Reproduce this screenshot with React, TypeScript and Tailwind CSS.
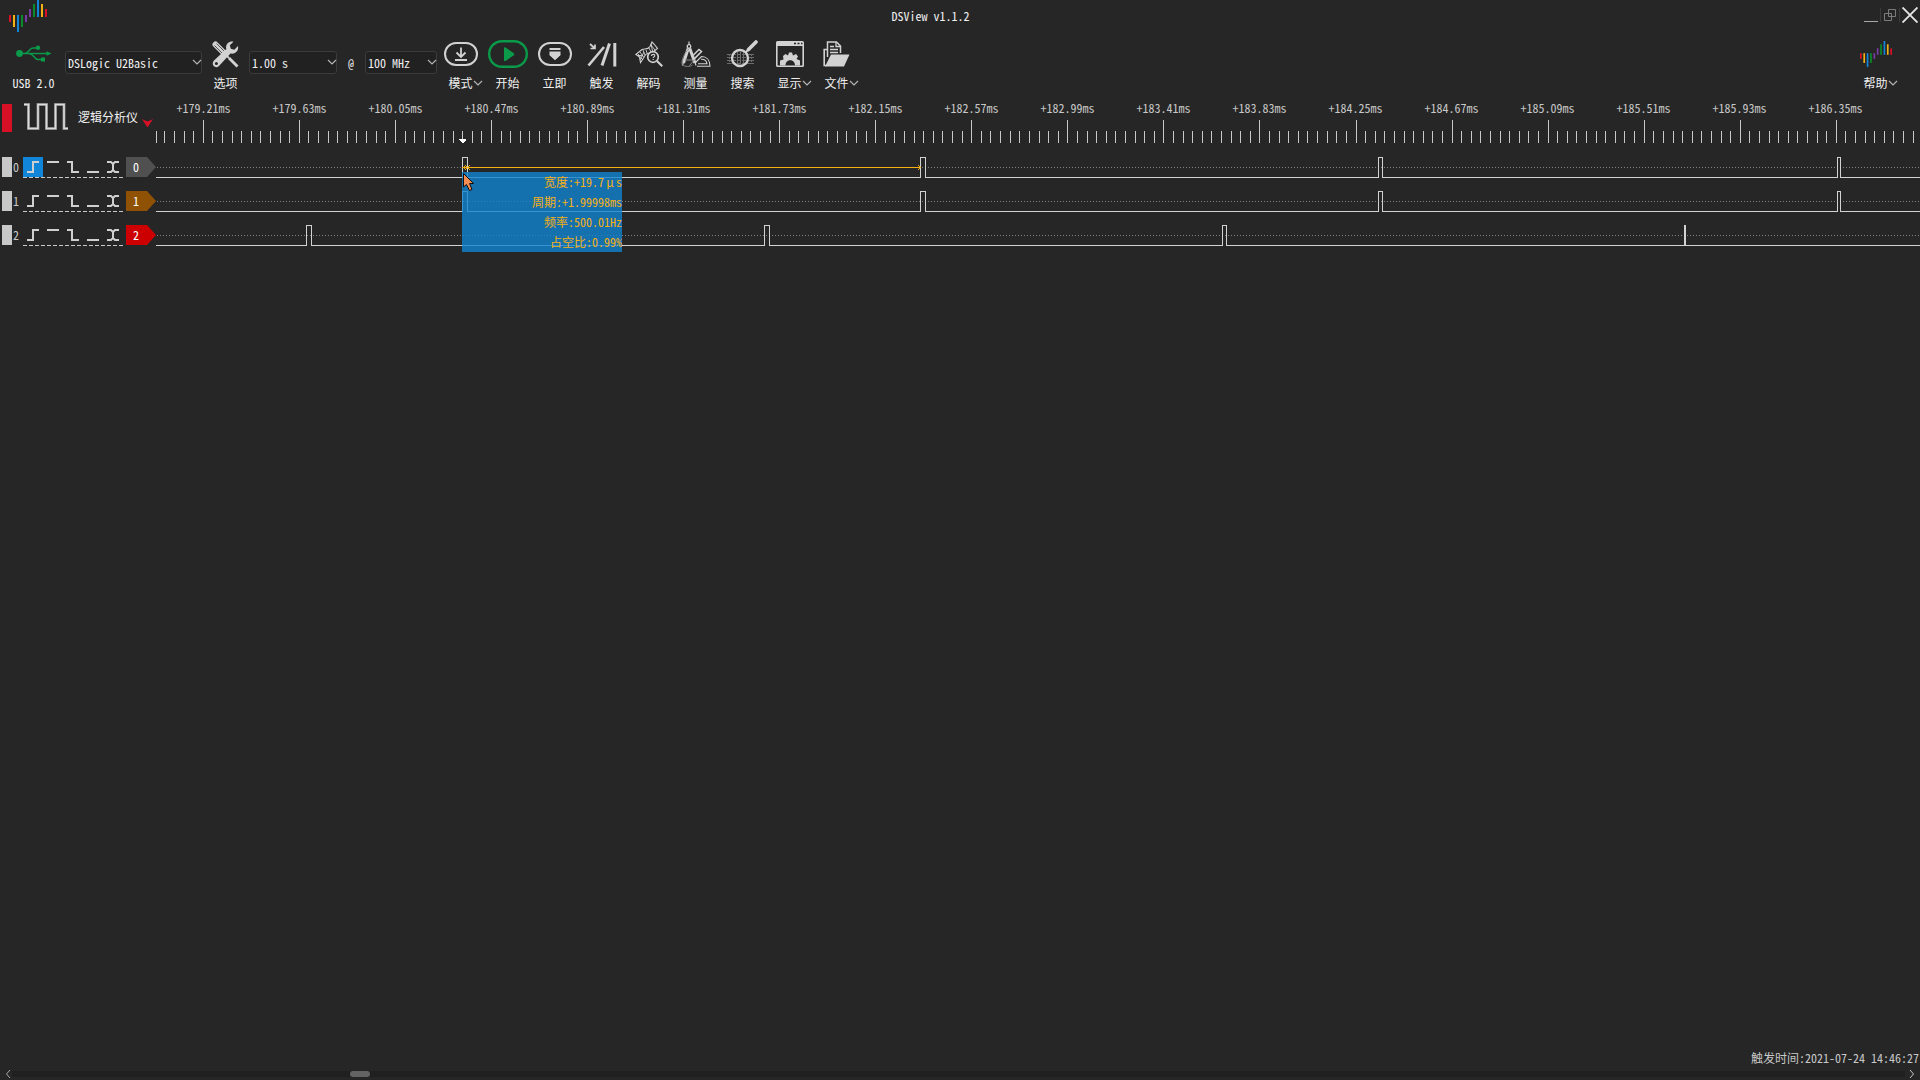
import React from 'react';
import type { ReactNode } from 'react';

const ink = '#d2d2d2';

const LOGO_BARS = [
  { x: 0, y: 15, h: 7, c: '#d81026' },
  { x: 4, y: 15, h: 12, c: '#f5b014' },
  { x: 8, y: 15, h: 17, c: '#1185d7' },
  { x: 12, y: 15, h: 12, c: '#098a2b' },
  { x: 16, y: 15, h: 7, c: '#7a3aa5' },
  { x: 20, y: 9, h: 8, c: '#7a3aa5' },
  { x: 24, y: 4, h: 13, c: '#098a2b' },
  { x: 28, y: 0, h: 17, c: '#1185d7' },
  { x: 32, y: 4, h: 13, c: '#f5b014' },
  { x: 36, y: 9, h: 8, c: '#d81026' },
];

function Logo({ width, height }: { width: number; height: number }) {
  return (
    <svg width={width} height={height} viewBox="0 0 38 32" preserveAspectRatio="none" aria-hidden="true">
      {LOGO_BARS.map((b) => (
        <rect key={b.x} x={b.x} y={b.y} width="2" height={b.h} fill={b.c} />
      ))}
    </svg>
  );
}

function Chevron() {
  return (
    <svg width="10" height="6" viewBox="0 0 10 6" fill="none" stroke="#b4b4b4" strokeWidth="1.2" aria-hidden="true">
      <path d="M1 1l4 4 4-4" />
    </svg>
  );
}

function Combo({ label, options, className }: { label: string; options: string[]; className: string }) {
  return (
    <div className={`relative flex h-[23px] ${className}`}>
      <select
        aria-label={label}
        className="w-full appearance-none rounded-[3px] border border-[#3b3b3b] bg-[#212121] pl-[2px] pr-3 text-xs leading-5 text-[#f0f0f0] outline-none"
      >
        {options.map((o) => (
          <option key={o}>{o}</option>
        ))}
      </select>
      <span className="pointer-events-none absolute right-0 top-2">
        <Chevron />
      </span>
    </div>
  );
}

function ToolButton({ label, menu, children }: { label: string; menu?: boolean; children: ReactNode }) {
  return (
    <button type="button" className="flex w-[47px] flex-col items-center text-xs text-[#f0f0f0]">
      <span className="flex h-[30px] items-center">{children}</span>
      <span className="mt-1 flex h-5 items-center whitespace-nowrap">
        {label}
        {menu && (
          <span className="w-0">
            <Chevron />
          </span>
        )}
      </span>
    </button>
  );
}

function UsbIcon() {
  return (
    <svg width="36" height="18" viewBox="0 0 36 18" fill="none" aria-hidden="true">
      <g stroke="#0a9a4a" strokeWidth="1.4">
        <path d="M3 8.5H31" />
        <path d="M9 8.5C13 8.500 13 3 17 3H22" />
        <path d="M13 8.500C18 8.500 18 14.500 22 14.500H26" />
      </g>
      <g fill="#0a9a4a">
        <circle cx="3.500" cy="8.500" r="3.400" />
        <circle cx="22" cy="2.700" r="2.200" />
        <rect x="25" y="12.500" width="4" height="4" />
        <path d="M30.500 6.200L35.500 8.500L30.500 10.800Z" />
      </g>
    </svg>
  );
}

function OptionsIcon() {
  return (
    <svg width="27" height="27" viewBox="0 0 27 27" fill="none" aria-hidden="true">
      <path d="M3.500 3.500L10.500 10.500" stroke={ink} strokeWidth="6" strokeLinecap="round" />
      <path d="M2.500 4.500L10 12M4.500 2.500L12 10" stroke="#444" strokeWidth="0.900" />
      <path d="M10 10L17 17" stroke={ink} strokeWidth="1.800" />
      <path d="M17 17L25.500 25.500" stroke={ink} strokeWidth="2.800" />
      <path
        d="M21.500 0.700C17.500-.4 13 3 14.300 8L2 19.500C-1.500 23.500 3 28.500 7 25L18.500 12.500C23.500 13.500 27 9.500 26 5L22.300 8.700L18.800 7.700L17.800 4.300Z"
        fill={ink}
      />
      <circle cx="4.400" cy="22.600" r="1.500" fill="#262626" />
    </svg>
  );
}

function ModeIcon() {
  return (
    <svg width="34" height="24" viewBox="0 0 34 24" fill="none" stroke={ink} aria-hidden="true">
      <rect x="1" y="1" width="32" height="22" rx="11" strokeWidth="2" />
      <path d="M17 5.500V14.500M12.500 10.500L17 15L21.500 10.500M11 18H23" strokeWidth="1.800" />
    </svg>
  );
}

function StartIcon() {
  return (
    <svg width="40" height="28" viewBox="0 0 40 28" fill="none" aria-hidden="true">
      <rect x="1.200" y="1.200" width="37.600" height="25.600" rx="12.800" stroke="#0a9a4a" strokeWidth="2.400" />
      <path d="M16 8V20.500C16 21.200 17 21.300 17.500 21L25.500 15.500C26.500 14.700 26.500 13.700 25.500 13L17.500 7.500C16.900 7.100 16 7.300 16 8Z" fill="#0a9a4a" />
    </svg>
  );
}

function InstantIcon() {
  return (
    <svg width="34" height="24" viewBox="0 0 34 24" fill="none" aria-hidden="true">
      <rect x="1" y="1" width="32" height="22" rx="11" stroke={ink} strokeWidth="2" />
      <path d="M11.500 6H22.500V8H11.500Z M11.500 9.500H22.500V13L17 18L11.500 13Z" fill={ink} />
      <path d="M12 12.500L17 17L22 12.500" stroke={ink} strokeWidth="1.500" />
    </svg>
  );
}

function TriggerIcon() {
  return (
    <svg width="30" height="25" viewBox="0 0 30 25" fill="none" stroke={ink} aria-hidden="true">
      <path d="M3 2L7.500 6M8 2.500V6.500H3.500" strokeWidth="1.700" />
      <path d="M1.500 23.500L17 5" strokeWidth="2.600" />
      <path d="M15 23.500L22.500 1.500" strokeWidth="3" />
      <path d="M27.800 1V24.500" strokeWidth="3" />
    </svg>
  );
}

function DecodeIcon() {
  return (
    <svg width="28" height="28" viewBox="0 0 28 28" fill="none" stroke={ink} aria-hidden="true">
      <path d="M.8 14.500L7 9.500C10 8.500 13 10 15 6.500L17 2L19 4L22.500 8.500L18 12C13 13.500 10.500 13 8.500 18L5.500 22.500L4.500 17Z" strokeWidth="1.100" />
      <path d="M3 14L7 19M5 12L8.500 17M8 10L10 15M11 10L12 13M14 8L16 12M16 5L20 10M2 15.500H8M16 4L17.500 11M5 20L9 12" strokeWidth="0.900" />
      <circle cx="18" cy="17" r="5.300" fill="#262626" strokeWidth="1.700" />
      <path d="M16.500 16C16.500 13.700 20 13.900 19.700 15.900C19.500 17 18.200 16.800 18.200 18M18.200 19V20" strokeWidth="1.200" />
      <path d="M22 21L27.300 26.300" strokeWidth="2.200" />
    </svg>
  );
}

function MeasureIcon() {
  return (
    <svg width="30" height="27" viewBox="0 0 30 27" fill="none" stroke={ink} aria-hidden="true">
      <path d="M8 .5V4" strokeWidth="1.200" />
      <circle cx="8" cy="5.500" r="1.800" strokeWidth="1.300" />
      <path d="M7.200 7.500L2.500 22M8.800 7.500L14 22" strokeWidth="3" />
      <path d="M2.500 21L1.500 24.500M14 21L15 24.500" strokeWidth="1.100" />
      <path d="M8 8C3 12 .5 19 1 23.500C4 26 9 26 11.500 24" stroke="#8a8a8a" strokeWidth="0.900" />
      <path d="M4 19H12M8.500 24.500L20 11" stroke="#8a8a8a" strokeWidth="1" />
      <path d="M16 25.300H29C29 19 25.500 15.500 20.500 15.500L14 22M17 22.800H26C25.500 19.500 23 18 20 18.200" strokeWidth="1.100" />
      <path d="M11 15.500L18 8.500L20.500 10.500L12.500 18.500" strokeWidth="1.500" />
    </svg>
  );
}

function SearchIcon() {
  return (
    <svg width="33" height="28" viewBox="0 0 33 28" fill="none" stroke={ink} aria-hidden="true">
      <g stroke="#6c6c6c" strokeWidth="1">
        <path d="M1 14.500H28M1 17.500H28M1 20.500H28M1 23.500H28" strokeDasharray="4 1" />
        <path d="M3.500 14V24M6 14V24M11.500 12V24M14.500 12V24M17.500 12V24M25.500 14V24" strokeDasharray="2 1" />
      </g>
      <circle cx="14" cy="18" r="8" strokeWidth="2.300" />
      <path d="M20 12L22.500 9.500" strokeWidth="2" />
      <path d="M22.500 9.500L30 2" strokeWidth="3.600" strokeLinecap="round" />
    </svg>
  );
}

function DisplayIcon() {
  return (
    <svg width="28" height="26" viewBox="0 0 28 26" fill="none" aria-hidden="true">
      <rect x="0.800" y="0.800" width="26.400" height="24.400" rx="0.800" stroke={ink} strokeWidth="1.600" />
      <path d="M1 1H27V5H1Z" fill={ink} />
      <path d="M18 2.500H20M21.500 2.500H23.500M25 2.500H26.500" stroke="#262626" strokeWidth="1.600" />
      <path d="M4 24.500V19.500L7.500 18.500L7 15L9.500 13L12 14.500L13 11.500H16L17 14.500L20 13L22 15.500L20.500 18L24 19.500V24.500H19C19 17.500 9.500 17.500 9.500 24.500Z" fill={ink} />
    </svg>
  );
}

function FileIcon() {
  return (
    <svg width="27" height="26" viewBox="0 0 27 26" fill="none" aria-hidden="true">
      <path d="M4.500 16V1H13.500L17.500 5V12" stroke={ink} strokeWidth="1.500" />
      <path d="M13 1V5.500H17.500M7 5.500H11M7 8.500H15M7 11.500H15" stroke={ink} strokeWidth="1.300" />
      <path d="M4 8.500H1.200V24.500H4" stroke={ink} strokeWidth="1.600" />
      <path d="M8 13.500H26.500L21 25.500H2Z" fill={ink} />
    </svg>
  );
}

const TOOLS: { label: string; menu?: boolean; icon: ReactNode }[] = [
  { label: '模式', menu: true, icon: <ModeIcon /> },
  { label: '开始', icon: <StartIcon /> },
  { label: '立即', icon: <InstantIcon /> },
  { label: '触发', icon: <TriggerIcon /> },
  { label: '解码', icon: <DecodeIcon /> },
  { label: '测量', icon: <MeasureIcon /> },
  { label: '搜索', icon: <SearchIcon /> },
  { label: '显示', menu: true, icon: <DisplayIcon /> },
  { label: '文件', menu: true, icon: <FileIcon /> },
];

function TitleBar() {
  return (
    <header className="flex h-8 items-start pl-[9px]">
      <Logo width={38} height={32} />
      <h1 className="flex-1 pr-12 pt-2 text-center text-xs leading-4 text-[#f0f0f0]">DSView v1.1.2</h1>
      <div className="flex h-[30px] items-center">
        <button type="button" aria-label="最小化" className="flex w-[18px] justify-center">
          <svg width="14" height="16" viewBox="0 0 14 16" aria-hidden="true">
            <path d="M0 14.500H14" stroke="#a8a8a8" />
          </svg>
        </button>
        <button type="button" aria-label="还原" className="flex w-5 justify-center border-x border-[#3a3a3a]">
          <svg width="12" height="14" viewBox="0 0 12 14" fill="none" stroke="#7c7c7c" aria-hidden="true">
            <path d="M0.500 5.500H7.500V12.500H.5Z M4.500 1.500H11.500V8.500H4.500Z" />
          </svg>
        </button>
        <button type="button" aria-label="关闭" className="flex w-5 justify-center">
          <svg width="16" height="16" viewBox="0 0 16 16" aria-hidden="true">
            <path d="M.5 .5L15.500 15.500M15.500 .5L.5 15.500" stroke="#e4e4e4" strokeWidth="1.900" />
          </svg>
        </button>
      </div>
    </header>
  );
}

function Toolbar() {
  return (
    <nav aria-label="工具栏" className="flex h-[66px] items-start pt-[7px]">
      <button type="button" className="flex w-[65px] flex-col items-center pl-0.5 text-xs text-[#f0f0f0]">
        <span className="flex h-[30px] items-center">
          <UsbIcon />
        </span>
        <span className="mt-1 flex h-5 items-center">USB 2.0</span>
      </button>
      <Combo label="设备" options={['DSLogic U2Basic']} className="mt-3 w-[137px]" />
      <ToolButton label="选项">
        <OptionsIcon />
      </ToolButton>
      <Combo label="采样时长" options={['1.00 s']} className="mt-3 w-[88px]" />
      <span className="mt-3 w-7 text-center text-xs leading-[23px] text-[#f0f0f0]">@</span>
      <Combo label="采样率" options={['100 MHz']} className="mt-3 w-[72px]" />
      <div className="flex flex-1">
        {TOOLS.map((t) => (
          <ToolButton key={t.label} label={t.label} menu={t.menu}>
            {t.icon}
          </ToolButton>
        ))}
      </div>
      <div className="pr-[21px]">
        <ToolButton label="帮助" menu>
          <Logo width={32} height={26} />
        </ToolButton>
      </div>
    </nav>
  );
}

const TICKS = Array.from({ length: 190 }, (_, i) => ({
  x: Math.floor(47.3 + 9.606 * (i - 4)),
  major: (i - 4) % 10 === 0,
}));

const TIMES = Array.from({ length: 18 }, (_, i) => `+${(179.21 + 0.42 * i).toFixed(2)}ms`);

function RulerRow() {
  return (
    <div className="flex h-[52px]">
      <div className="flex w-[156px] shrink-0 items-start pl-0.5 pt-[5px]">
        <span className="mt-px h-[28px] w-2.5 bg-[#d81026]" />
        <svg className="ml-3" width="44" height="27" viewBox="0 0 44 27" fill="none" aria-hidden="true">
          <path d="M0 1.500H4.500V25.500H14V1.500H22.500V25.500H31.500V1.500H40V25.500H44" stroke="#7d7d7d" strokeWidth="3" />
          <path d="M0 1.500H4.500V25.500H14V1.500H22.500V25.500H31.500V1.500H40V25.500H44" stroke="#dcdcdc" strokeWidth="1.600" />
        </svg>
        <button type="button" className="ml-2.5 flex items-end text-xs leading-7 text-[#f0f0f0]">
          逻辑分析仪
          <svg className="mb-[3px] ml-1" width="11" height="9" viewBox="0 0 11 9" aria-hidden="true">
            <path d="M0 0L5.500 2.500L11 0L5.500 8.500Z" fill="#d81026" />
          </svg>
        </button>
      </div>
      <div className="min-w-0 flex-1 overflow-hidden">
        <div className="h-[22px] text-xs leading-5 text-[#c8c8c8]">
          <div className="flex">
            {TIMES.map((t) => (
              <span key={t} className="w-24 shrink-0 pr-px text-center">
                {t}
              </span>
            ))}
          </div>
        </div>
        <svg className="block w-full" height="24" shapeRendering="crispEdges" aria-hidden="true">
          <rect x="0" y="11" width="1" height="12" fill="#c8c8c8" />
          {TICKS.map((t) => (
            <rect key={t.x} x={t.x} y={t.major ? 0 : 11} width="1" height={t.major ? 23 : 12} fill="#c8c8c8" />
          ))}
          <path d="M303 19H310V20L307 23H306L303 20Z" fill="#fff" />
        </svg>
      </div>
    </div>
  );
}

const EDGES = [
  { name: '上升沿', d: 'M4 15H10V5H16' },
  { name: '高电平', d: 'M4 5H16' },
  { name: '下降沿', d: 'M4 5H9V15H16' },
  { name: '低电平', d: 'M4 15H16' },
  { name: '双边沿', d: 'M4 5H8L10 7L12 5H16M4 15H8L10 13L12 15H16M10 7V13' },
];

interface Channel {
  id: number;
  tag: string;
  trace: string;
  active?: boolean;
}

const CHANNELS: Channel[] = [
  {
    id: 0,
    tag: 'bg-[#505050]',
    active: true,
    trace: 'M0 27.5H306.5V7.5H311.5V27.5H764.5V7.5H769.5V27.5H1222.5V7.5H1226.5V27.5H1681.5V7.5H1684.5V27.5H6000',
  },
  {
    id: 1,
    tag: 'bg-[#8f5205]',
    trace: 'M0 27.5H306.5V7.5H311.5V27.5H764.5V7.5H769.5V27.5H1222.5V7.5H1226.5V27.5H1681.5V7.5H1684.5V27.5H6000',
  },
  {
    id: 2,
    tag: 'bg-[#cc0000]',
    trace: 'M0 27.5H150.5V7.5H155.5V27.5H608.5V7.5H613.5V27.5H1066.5V7.5H1070.5V27.5H1528.5V7.5H1529.5V27.5H6000',
  },
];

function ChannelRow({ ch }: { ch: Channel }) {
  return (
    <div className="flex h-[34px]">
      <div className="flex w-[156px] shrink-0 items-start pl-0.5 pt-[7px] text-xs leading-5">
        <span className="h-5 w-2.5 bg-[#c8c8c8]" />
        <span className="w-[11px] pl-px text-[#c8c8c8]">{ch.id}</span>
        <div className="w-[100px]">
          <div className="flex">
            {EDGES.map((e, i) => (
              <button
                key={e.name}
                type="button"
                aria-label={`通道 ${ch.id} ${e.name}`}
                className={ch.active && i === 0 ? 'size-5 bg-[#1185d7]' : 'size-5'}
              >
                <svg width="20" height="20" viewBox="0 0 20 20" fill="none" stroke="#cfcfcf" strokeWidth="2" aria-hidden="true">
                  <path d={e.d} />
                </svg>
              </button>
            ))}
          </div>
          <svg className="block" width="100" height="1" shapeRendering="crispEdges" aria-hidden="true">
            <path d="M0 .5H100" stroke="#c8c8c8" strokeDasharray="4 2" />
          </svg>
        </div>
        <span
          className={`ml-[3px] h-5 w-[30px] pl-[7px] text-xs leading-5 text-white [clip-path:polygon(0_0,70%_0,100%_50%,70%_100%,0_100%)] ${ch.tag}`}
        >
          {ch.id}
        </span>
      </div>
      <svg className="block h-[34px] min-w-0 flex-1 overflow-hidden" aria-hidden="true">
        <path d="M1 17.500H6000" stroke="#808080" strokeDasharray="1 2" shapeRendering="crispEdges" />
        <path d={ch.trace} fill="none" stroke="#d2d2d2" shapeRendering="crispEdges" />
        {ch.active && (
          <g stroke="#f5b014" fill="none">
            <path d="M306 17.500H765" shapeRendering="crispEdges" />
            <path d="M310 15L307.500 17.500L310 20M309 15L314 20M309 20L314 15M762 15L764.500 17.500L762 20" />
          </g>
        )}
      </svg>
    </div>
  );
}

const MEASURES: { name: string; value: ReactNode }[] = [
  {
    name: '宽度',
    value: (
      <>
        +19.7<span className="inline-block w-3 text-center">μ</span>s
      </>
    ),
  },
  { name: '周期', value: '+1.99998ms' },
  { name: '频率', value: '500.01Hz' },
  { name: '占空比', value: '0.99%' },
];

function MeasureTip() {
  return (
    <div className="absolute left-[462px] top-[22px] w-40 bg-[#1185d1]/80 text-right text-xs leading-5 text-[#f5b014]">
      {MEASURES.map((m) => (
        <p key={m.name}>
          {m.name}:{m.value}
        </p>
      ))}
      <svg className="absolute left-px top-px" width="12" height="19" viewBox="0 0 12 19" aria-hidden="true">
        <path d="M.5 .5V14L3.500 11.500L6.500 17.500L9 16.500L6.500 10.500H10.500Z" fill="#f28c50" stroke="#111" />
      </svg>
    </div>
  );
}

export default function App() {
  return (
    <div className="flex min-h-screen flex-col overflow-hidden bg-[#262626] font-['Noto_Sans_Mono_CJK_SC','Noto_Sans_CJK_SC',monospace]">
      <TitleBar />
      <Toolbar />
      <main className="flex flex-1 flex-col">
        <RulerRow />
        <section aria-label="通道" className="relative">
          {CHANNELS.map((ch) => (
            <ChannelRow key={ch.id} ch={ch} />
          ))}
          <MeasureTip />
        </section>
      </main>
      <footer>
        <p className="pr-px text-right text-xs leading-5 text-[#c8c8c8]">触发时间:2021-07-24 14:46:27</p>
        <div className="flex h-3 items-center px-[5px]">
          <button type="button" aria-label="向左滚动">
            <svg width="6" height="8" viewBox="0 0 6 8" fill="none" stroke="#a8a8a8" aria-hidden="true">
              <path d="M5 0L1.500 4L5 8" />
            </svg>
          </button>
          <div className="ml-px mr-1 flex h-1.5 flex-1 bg-[#202020]">
            <div className="w-[338px]" />
            <div className="h-1.5 w-5 rounded-full bg-[#646464]" />
          </div>
          <button type="button" aria-label="向右滚动">
            <svg width="6" height="8" viewBox="0 0 6 8" fill="none" stroke="#c8c8c8" aria-hidden="true">
              <path d="M1 0L4.500 4L1 8" />
            </svg>
          </button>
        </div>
      </footer>
    </div>
  );
}
